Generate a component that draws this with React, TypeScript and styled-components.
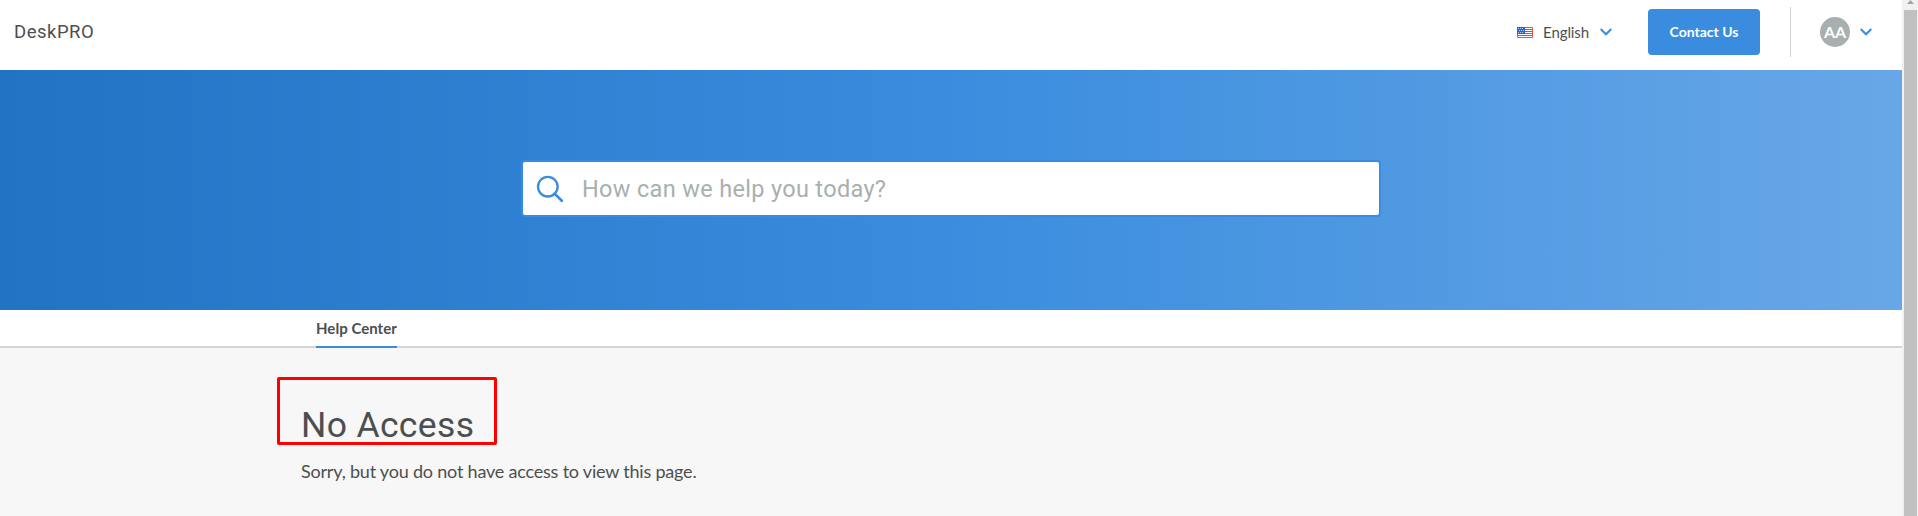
import React from "react";
import styled, { createGlobalStyle } from "styled-components";

const Global = createGlobalStyle`
  * { box-sizing: border-box; }
  body { margin: 0; background: #f7f7f7; color: #4c4f50; font-family: Lato, sans-serif; overflow: hidden; }
`;
const heading = `Roboto, sans-serif`;

const Window = styled.div`display: flex; width: 1918px; height: 516px;`;
const Page = styled.div`flex: 1; min-width: 0; background: #f7f7f7;`;
const Header = styled.header`
  display: flex; align-items: center; justify-content: space-between;
  height: 70px; padding: 0 30px 6px 14px; background: #fff;
`;
const Brand = styled.div`
  font: 400 18.5px/24px ${heading}; letter-spacing: 0.5px;
`;
const Actions = styled.div`display: flex; align-items: center;`;
const Language = styled.div`
  display: flex; align-items: center; margin-right: 36px;
  font-size: 15px; line-height: 20px;
  span { margin: 0 11px 1px 10px; letter-spacing: -0.1px; }
`;
const ContactButton = styled.button`
  width: 112px; height: 46px; padding: 0; border: 0; border-radius: 4px;
  background: #3a8dde; color: #fff; font: 700 14px/20px Lato, sans-serif;
`;
const Divider = styled.div`width: 1px; height: 50px; margin: 0 29px 0 30px; background: #d0d3d4;`;
const Avatar = styled.div`
  width: 30px; height: 30px; margin-right: 10px; border-radius: 50%;
  background: #a8b0af; color: #fff; font-size: 16px; font-weight: 700; line-height: 30px; text-align: center;
`;
const Hero = styled.section`
  display: flex; align-items: center; justify-content: center;
  height: 240px; padding-bottom: 3px;
  background: linear-gradient(90deg, #2173c4 0%, #3a8dde 50%, #68a7e7 100%);
`;
const Search = styled.label`
  display: flex; align-items: center; width: 860px; height: 57px; padding: 0 12px;
  border: 2px solid #3a8dde; border-radius: 4px; background: #fff;
`;
const SearchInput = styled.input`
  flex: 1; margin-left: 18px; padding: 0; border: 0; outline: 0; background: none;
  font: 400 23.5px/30px ${heading}; letter-spacing: 0.33px;
  &::placeholder { color: #a8b0af; opacity: 1; }
`;
const Tabs = styled.nav`
  display: flex; height: 38px; padding-left: 316px;
  background: #fff; border-bottom: 2px solid #d0d6d5;
`;
const Tab = styled.a`
  height: 38px; border-bottom: 2px solid #3a8dde;
  font-size: 15px; font-weight: 700; line-height: 37px; letter-spacing: 0.03px;
`;
const Content = styled.main`padding: 54px 301px 0;`;
const Title = styled.h1`
  position: relative; width: max-content; margin: 0; font: 400 35.5px/46px ${heading}; letter-spacing: 0.35px;
`;
const Highlight = styled.div`
  position: absolute; left: -24px; top: -25px; width: 220px; height: 68px;
  border: 3px solid #fe0000; border-radius: 2px;
`;
const Message = styled.p`margin: 11px 0 0; font-size: 18px; line-height: 24px; letter-spacing: -0.2px;`;
const Scrollbar = styled.div`
  display: flex; flex-direction: column; width: 16px; padding: 0 1px 0 2px; background: #f1f1f1;
  svg { display: block; height: 10px; flex: none; }
`;
const Thumb = styled.div`flex: 1; background: #c1c1c1;`;

const Chevron = () => (
  <svg width="12" height="8" viewBox="0 0 12 8" fill="none" stroke="#3a8dde" strokeWidth="2">
    <path d="M.7 1 6 6.3 11.3 1" />
  </svg>
);

const Flag = () => (
  <svg width="16" height="11" viewBox="0 0 16 11">
    <path fill="#fff" d="M0 0h16v11H0z" />
    <path stroke="#f33b32" d="M8 2.5h8M8 4.5h8M0 6.5h16M0 8.5h16" />
    <path stroke="#d75b45" fill="none" d="M.5.5h15v10H.5z" />
    <path fill="#2b62dc" d="M0 0h8v7H0z" />
    <path stroke="#b8cdfa" strokeDasharray="1 1" d="M1 1.5h6M2 3.5h5M1 5.5h6" />
  </svg>
);

const SearchIcon = () => (
  <svg width="29" height="27" viewBox="0 0 29 27" fill="none" stroke="#3a8dde" strokeWidth="2.3">
    <circle cx="12.8" cy="11.7" r="9.8" />
    <path d="m19.6 18.6 7.2 7.2" strokeWidth="2.7" strokeLinecap="round" />
  </svg>
);

export default function App() {
  return (
    <Window>
      <Global />
      <Page>
        <Header>
          <Brand>DeskPRO</Brand>
          <Actions>
            <Language><Flag /><span>English</span><Chevron /></Language>
            <ContactButton>Contact Us</ContactButton>
            <Divider />
            <Avatar>AA</Avatar>
            <Chevron />
          </Actions>
        </Header>
        <Hero>
          <Search>
            <SearchIcon />
            <SearchInput placeholder="How can we help you today?" />
          </Search>
        </Hero>
        <Tabs><Tab>Help Center</Tab></Tabs>
        <Content>
          <Title>No Access<Highlight /></Title>
          <Message>Sorry, but you do not have access to view this page.</Message>
        </Content>
      </Page>
      <Scrollbar>
        <svg width="13" height="10" viewBox="0 0 13 10"><path fill="#a3a3a3" d="M3 4 6.5 0 10 4z" /></svg>
        <Thumb />
      </Scrollbar>
    </Window>
  );
}
